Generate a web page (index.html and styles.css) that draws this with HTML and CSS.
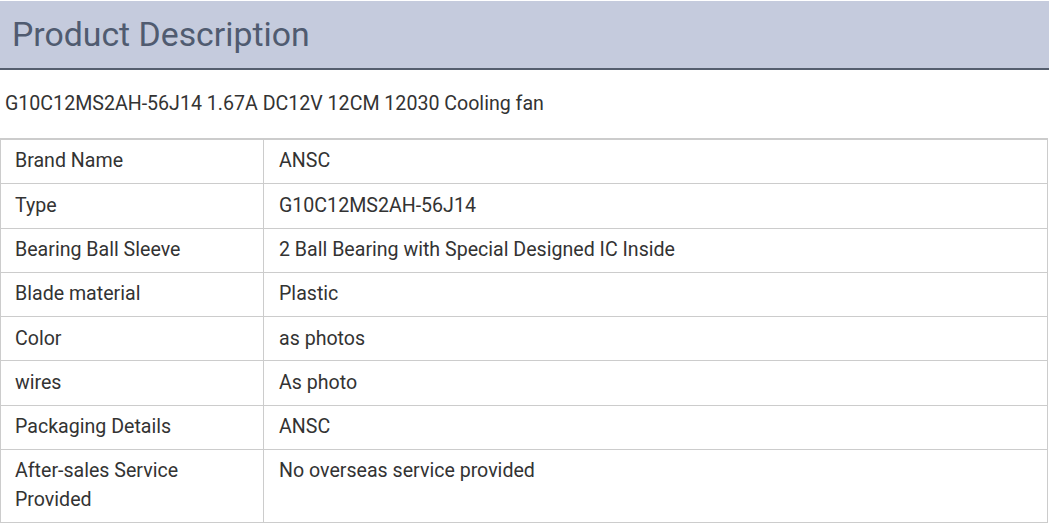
FILE: index.html
```html
<!DOCTYPE html>
<html>
<head>
<meta charset="utf-8">
<link rel="stylesheet" href="styles.css">
</head>
<body>
<div class="page">
  <div class="header"><h2 class="title">Product Description</h2></div>
  <p class="desc">G10C12MS2AH-56J14 1.67A DC12V 12CM 12030 Cooling fan</p>
  <table class="spec">
    <tr><td class="k">Brand Name</td><td class="v">ANSC</td></tr>
    <tr><td class="k">Type</td><td class="v">G10C12MS2AH-56J14</td></tr>
    <tr><td class="k">Bearing Ball Sleeve</td><td class="v">2 Ball Bearing with Special Designed IC Inside</td></tr>
    <tr><td class="k">Blade material</td><td class="v">Plastic</td></tr>
    <tr><td class="k">Color</td><td class="v">as photos</td></tr>
    <tr><td class="k">wires</td><td class="v">As photo</td></tr>
    <tr><td class="k">Packaging Details</td><td class="v">ANSC</td></tr>
    <tr><td class="k">After-sales Service Provided</td><td class="v">No overseas service provided</td></tr>
  </table>
</div>
</body>
</html>
```
FILE: styles.css
```css
html, body { margin: 0; padding: 0; background: #fff; }
body { font-family: Roboto, "Liberation Sans", sans-serif; color: #333; }
.page { width: 1049px; padding-top: 1px; }
.header {
  background: #c5cbdd;
  height: 67px;
  border-bottom: 2px solid #555e6e;
  display: flex;
  align-items: center;
  padding-left: 12px;
}
.title { margin: 0; font-size: 33.8px; font-weight: 400; color: #505b70; }
.desc { margin: 0; padding: 22px 0 0 5px; height: 46px; font-size: 19.6px; line-height: 24px; color: #333; }
.spec {
  width: 1048px;
  border-collapse: collapse;
  font-size: 19.6px;
  line-height: 28.5px;
}
.spec td {
  border: 1px solid #ccc;
  padding: 7.4px 14px;
  vertical-align: top;
  color: #333;
}
.spec td.k { width: 234px; }
.spec td.v { padding-left: 15px; }
.spec tr:first-child td { border-top-width: 2px; }
```
